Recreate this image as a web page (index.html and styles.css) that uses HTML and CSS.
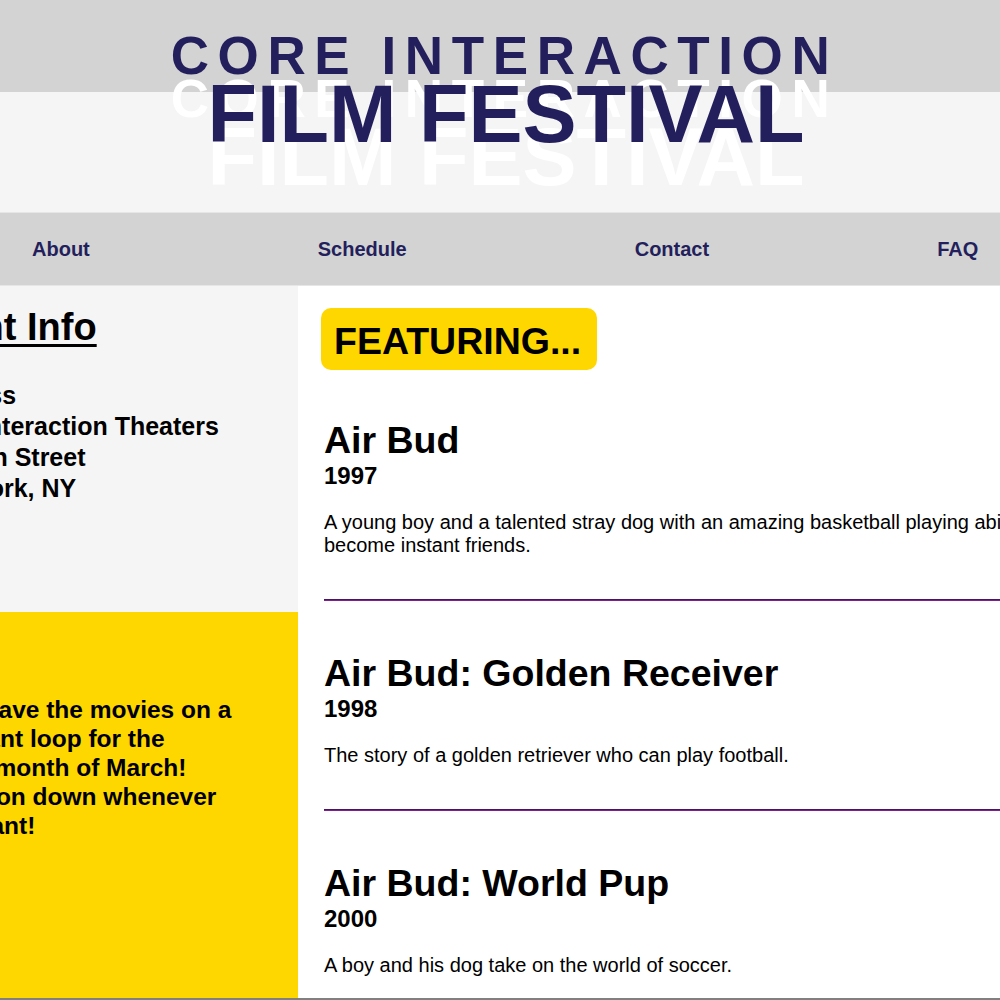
FILE: index.html
```html
<!DOCTYPE html>
<html lang="en">
<head>
<meta charset="utf-8">
<title>Core Interaction Film Festival</title>
<link rel="stylesheet" href="styles.css">
</head>
<body>
<header class="masthead">
  <h1 class="title">
    <span class="title-top">CORE INTERACTION</span>
    <span class="title-main">FILM FESTIVAL</span>
  </h1>
</header>
<nav class="nav">
  <a class="nav-link" href="#">About</a>
  <a class="nav-link" href="#">Schedule</a>
  <a class="nav-link" href="#">Contact</a>
  <a class="nav-link" href="#">FAQ</a>
</nav>
<div class="page">
  <aside class="sidebar">
    <section class="info">
      <h2 class="info-title">Event Info</h2>
      <p class="info-text">Address<br>Core Interaction Theaters<br>12 Main Street<br>New York, NY</p>
    </section>
    <section class="promo">
      <p class="promo-text">We'll have the movies on a constant loop for the entire month of March! Come on down whenever you want!</p>
    </section>
  </aside>
  <main class="films">
    <h2 class="featuring">FEATURING...</h2>
    <article class="film film-first">
      <h2 class="film-title">Air Bud</h2>
      <h3 class="film-year">1997</h3>
      <p class="film-desc">A young boy and a talented stray dog with an amazing basketball playing ability become instant friends.</p>
    </article>
    <hr class="divider">
    <article class="film">
      <h2 class="film-title">Air Bud: Golden Receiver</h2>
      <h3 class="film-year">1998</h3>
      <p class="film-desc">The story of a golden retriever who can play football.</p>
    </article>
    <hr class="divider">
    <article class="film">
      <h2 class="film-title">Air Bud: World Pup</h2>
      <h3 class="film-year">2000</h3>
      <p class="film-desc">A boy and his dog take on the world of soccer.</p>
    </article>
  </main>
</div>
</body>
</html>
```
FILE: styles.css
```css
html, body {
  margin: 0;
  padding: 0;
  overflow: hidden;
  background: #ffffff;
}

body {
  font-family: "Liberation Sans", Arial, Helvetica, sans-serif;
  color: #000;
  width: 1000px;
}

.masthead {
  height: 212px;
  background: linear-gradient(#d3d3d3 0, #d3d3d3 92px, #f5f5f5 92px, #f5f5f5 100%);
  border-bottom: 1px solid #e6e6e6;
  overflow: hidden;
}

.title {
  margin: 0;
  padding-top: 27px;
  text-align: center;
  color: #231f5c;
  font-weight: bold;
  text-shadow: 0 43px #ffffff;
}

.title-top {
  display: block;
  font-size: 53px;
  line-height: 58px;
  letter-spacing: 8.6px;
  margin-right: -9px;
}

.title-main {
  display: block;
  font-size: 81px;
  line-height: 58px;
  margin-left: 12px;
}

.nav {
  height: 72px;
  background: #d3d3d3;
  display: flex;
  align-items: center;
  gap: 228px;
  padding-left: 32px;
  border-bottom: 1px solid #e6e6e6;
  white-space: nowrap;
}

.nav-link {
  color: #231f5c;
  font-weight: bold;
  font-size: 20px;
  text-decoration: none;
}

.page {
  display: grid;
  grid-template-columns: 298px 780px;
  height: 712px;
  border-bottom: 2px solid #808080;
  overflow: hidden;
}

.sidebar {
  display: flex;
  flex-direction: column;
  overflow: hidden;
}

.info {
  height: 326px;
  background: #f5f5f5;
  padding-top: 21px;
  box-sizing: border-box;
}

.info-title {
  margin: 0 0 0 -87px;
  font-size: 38px;
  line-height: 41px;
  white-space: nowrap;
  text-decoration: underline;
  text-decoration-thickness: 3px;
  text-underline-offset: 4px;
}

.info-text {
  margin: 32px 0 0 -84px;
  font-size: 25px;
  line-height: 31px;
  font-weight: bold;
  white-space: nowrap;
}

.promo {
  flex: 1;
  background: #ffd700;
  padding-top: 83px;
}

.promo-text {
  margin: 0 0 0 -79px;
  width: 314px;
  font-size: 24.5px;
  line-height: 29px;
  font-weight: bold;
}

.films {
  padding: 22px 0 0 26px;
}

.featuring {
  display: inline-block;
  margin: 0 0 0 -3px;
  padding: 12px 16px 8px 13px;
  background: #ffd700;
  border-radius: 10px;
  font-size: 37.5px;
  line-height: 42px;
}

.film-first {
  margin-top: 49px;
}

.film-title {
  margin: 0;
  font-size: 37.5px;
  line-height: 42px;
}

.film-year {
  margin: 1px 0 0;
  font-size: 24px;
  line-height: 28px;
}

.film-desc {
  margin: 21px 0 0;
  font-size: 20px;
  line-height: 23px;
}

.divider {
  margin: 42px 0 51px;
  height: 0;
  border: 0;
  border-top: 1px solid #4a1464;
  border-bottom: 1px solid #80208f;
}
```
